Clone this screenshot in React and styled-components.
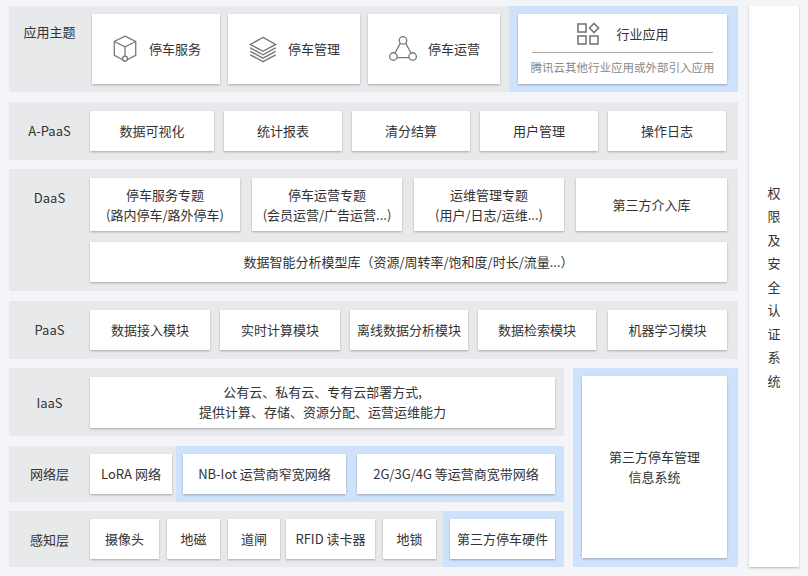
import React from "react";
import styled, { createGlobalStyle } from "styled-components";

const G = createGlobalStyle`
  body{margin:0;background:#f3f5f8;font-family:"Noto Sans CJK SC","Noto Sans",sans-serif;color:#333;}
`;
const Page = styled.div`display:flex;gap:11px;padding:6px 9px 9px 9px;width:808px;box-sizing:border-box;height:576px;`;
const Left = styled.div`display:flex;flex-direction:column;gap:9.5px;width:729px;`;
const Row = styled.div`display:flex;align-items:center;height:${p=>p.h}px;background:#e8e9eb;width:${p=>p.w||729}px;flex:none;`;
const Label = styled.div`width:81px;flex:none;text-align:center;font-size:13px;align-self:${p=>p.top?"flex-start":"center"};padding-top:${p=>p.top||0}px;`;
const Boxes = styled.div`display:flex;gap:${p=>p.gap||10}px;align-items:center;`;
const Seg = styled.div`display:flex;align-items:center;align-self:stretch;background:${p=>p.blue?"#cfe2fc":"transparent"};padding:0 ${p=>p.pr||0}px 0 ${p=>p.pl||0}px;flex:${p=>p.grow?1:"none"};gap:${p=>p.gap||10}px;`;
const Box = styled.div`background:#fff;box-shadow:0 1px 2px rgba(0,0,0,.28);width:${p=>p.w}px;height:${p=>p.h||40}px;display:flex;align-items:center;justify-content:center;flex:none;font-size:13px;text-align:center;line-height:20px;gap:10px;flex-direction:${p=>p.col?"column":"row"};`;
const Bottom = styled.div`display:flex;gap:9px;`;
const BottomRows = styled.div`display:flex;flex-direction:column;gap:9.5px;`;
const BlueCol = styled.div`background:#cfe2fc;width:165px;padding:8px 11px 8px 9px;box-sizing:border-box;display:flex;`;
const Right = styled.div`width:50px;background:#fff;box-shadow:0 1px 2px rgba(0,0,0,.25);display:flex;align-items:center;justify-content:center;font-size:13px;`;
const Vert = styled.div`width:14px;line-height:23.5px;text-align:center;word-break:break-all;`;
const Rule = styled.div`width:181px;border-top:1px solid #aaa;`;
const Sub = styled.div`font-size:11.5px;color:#888;`;
const Head = styled.div`display:flex;align-items:center;gap:16px;`;
const Stack = styled.div`display:flex;flex-direction:column;gap:11px;`;

const ic = {fill:"none",stroke:"#777",strokeWidth:1.2};
const Cube=()=>(<svg width="28" height="30" viewBox="0 0 26 28" {...ic}><path d="M13 2 L23 7 V20 L13 25 L3 20 V7 Z"/><path d="M3 7 L13 12 L23 7 M13 12 V21"/><circle cx="13" cy="23" r="2.3" fill="#fff"/></svg>);
const Layers=()=>(<svg width="30" height="30" viewBox="0 0 26 26" {...ic}><path d="M13 3 L24 9 L13 15 L2 9 Z"/><path d="M2 12 L13 18 L24 12"/><path d="M2 15 L13 21 L24 15"/><path d="M2 18 L13 24 L24 18"/></svg>);
const Net=()=>(<svg width="30" height="28" viewBox="0 0 28 26" {...ic}><circle cx="14" cy="5" r="3.5"/><circle cx="5" cy="20" r="3.5"/><circle cx="23" cy="20" r="3.5"/><path d="M11.5 7.5 L6.5 17 M16.5 7.5 L21.5 17 M8.5 21 H19.5"/></svg>);
const Apps=()=>(<svg width="24" height="24" viewBox="0 0 24 24" fill="none" stroke="#777" strokeWidth="1.6"><rect x="2" y="2" width="8" height="8"/><rect x="2" y="14" width="8" height="8"/><rect x="14" y="14" width="8" height="8"/><path d="M18 1.5 L22.5 6 L18 10.5 L13.5 6 Z"/></svg>);

export default function App(){
  return (<><G/><Page>
    <Left>
      <Row h={86}>
        <Label top={16}>应用主题</Label>
        <Boxes gap={8} style={{marginLeft:2}}>
          <Box w={128} h={70}><Cube/>停车服务</Box>
          <Box w={132} h={70}><Layers/>停车管理</Box>
          <Box w={132} h={70}><Net/>停车运营</Box>
        </Boxes>
        <Seg blue pl={9} pr={11} style={{marginLeft:9}} grow>
          <Box w={209} h={70} col style={{gap:0}}>
            <Head><Apps/>行业应用</Head>
            <Rule style={{margin:"6px 0 4px"}}/>
            <Sub>腾讯云其他行业应用或外部引入应用</Sub>
          </Box>
        </Seg>
      </Row>
      <Row h={58}><Label>A-PaaS</Label>
        <Boxes>
          <Box w={124}>数据可视化</Box><Box w={118}>统计报表</Box><Box w={118}>清分结算</Box><Box w={118}>用户管理</Box><Box w={118}>操作日志</Box>
        </Boxes>
      </Row>
      <Row h={122}><Label top={19}>DaaS</Label>
        <Stack>
          <Boxes gap={12}>
            <Box w={150} h={53}>停车服务专题<br/>(路内停车/路外停车)</Box>
            <Box w={150} h={53}>停车运营专题<br/>(会员运营/广告运营...)</Box>
            <Box w={150} h={53}>运维管理专题<br/>(用户/日志/运维...)</Box>
            <Box w={151} h={53}>第三方介入库</Box>
          </Boxes>
          <Box w={637}>数据智能分析模型库（资源/周转率/饱和度/时长/流量...）</Box>
        </Stack>
      </Row>
      <Row h={58}><Label>PaaS</Label>
        <Boxes>
          <Box w={120}>数据接入模块</Box><Box w={120}>实时计算模块</Box><Box w={118}>离线数据分析模块</Box><Box w={118}>数据检索模块</Box><Box w={119} style={{marginLeft:2}}>机器学习模块</Box>
        </Boxes>
      </Row>
      <Bottom>
        <BottomRows>
          <Row h={68} w={555}><Label>IaaS</Label><Box w={465} h={51}>公有云、私有云、专有云部署方式,<br/>提供计算、存储、资源分配、运营运维能力</Box></Row>
          <Row h={56} w={555}><Label>网络层</Label>
            <Seg pr={4}><Box w={82}>LoRA 网络</Box></Seg>
            <Seg blue pl={7} grow gap={11}><Box w={163}>NB-Iot 运营商窄宽网络</Box><Box w={198}>2G/3G/4G 等运营商宽带网络</Box></Seg>
          </Row>
          <Row h={56} w={555}><Label>感知层</Label>
            <Seg gap={8}><Box w={69}>摄像头</Box><Box w={53}>地磁</Box><Box w={52}>道闸</Box><Box w={89} style={{marginLeft:-2}}>RFID 读卡器</Box><Box w={53}>地锁</Box></Seg>
            <Seg blue pl={7} grow style={{marginLeft:7}}><Box w={105}>第三方停车硬件</Box></Seg>
          </Row>
        </BottomRows>
        <BlueCol><Box w={145} h={182} col style={{gap:0}}>第三方停车管理<br/>信息系统</Box></BlueCol>
      </Bottom>
    </Left>
    <Right><Vert>权限及安全认证系统</Vert></Right>
  </Page></>);
}
